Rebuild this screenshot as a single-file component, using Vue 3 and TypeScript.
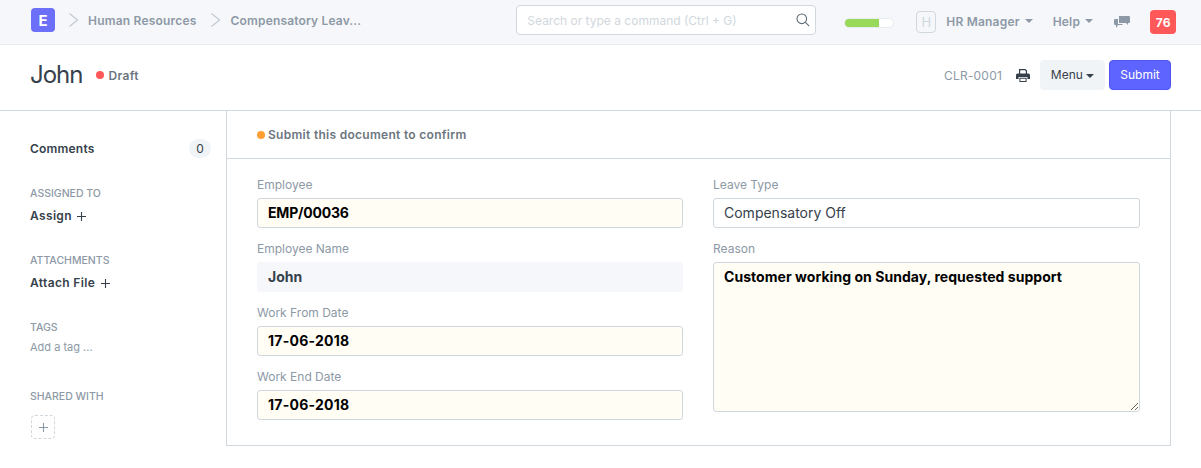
<script setup lang="ts">
interface Field { label: string; value: string; kind: string }
const left: Field[] = [
  { label: 'Employee', value: 'EMP/00036', kind: 'req tight' },
  { label: 'Employee Name', value: 'John', kind: 'read' },
  { label: 'Work From Date', value: '17-06-2018', kind: 'req date' },
  { label: 'Work End Date', value: '17-06-2018', kind: 'req date' },
]
</script>

<template>
  <div class="page">
    <header class="nav">
      <div class="logo">E</div>
      <svg class="chev" width="12" height="16" viewBox="0 0 12 16"><path d="M1.5 1.5 L9.5 8 L1.5 14.5" /></svg>
      <span class="crumb c1">Human Resources</span>
      <svg class="chev c2" width="12" height="16" viewBox="0 0 12 16"><path d="M1.5 1.5 L9.5 8 L1.5 14.5" /></svg>
      <span class="crumb c3">Compensatory Leav...</span>
      <div class="search">
        <span>Search or type a command (Ctrl + G)</span>
        <svg width="14" height="14" viewBox="0 0 14 14"><circle cx="5.8" cy="5.8" r="4.8" /><path d="M9.4 9.4 L13.2 13.2" /></svg>
      </div>
      <div class="progress"><div class="bar"></div></div>
      <div class="avatar">H</div>
      <span class="navlink user">HR Manager <i class="caret"></i></span>
      <span class="navlink help">Help <i class="caret"></i></span>
      <svg class="chat" width="16" height="14" viewBox="0 0 16 14">
        <path d="M5 1h10a1 1 0 0 1 1 1v5a1 1 0 0 1-1 1h-1v2l-2-2H5z" />
        <path d="M4 4v5h5l-1 1H4l-2 3v-3H1a1 1 0 0 1-1-1V5a1 1 0 0 1 1-1z" />
      </svg>
      <div class="badge">76</div>
    </header>

    <section class="head">
      <h1>John</h1>
      <i class="dot red"></i>
      <span class="status">Draft</span>
      <span class="docname">CLR-0001</span>
      <svg class="print" width="14" height="13" viewBox="0 0 14 13">
        <path d="M3 0h6.5L11 1.5V5H9.8V2.2L9 1.2H4.2V5H3z" />
        <path d="M1.5 4.5h11A1.5 1.5 0 0 1 14 6v4h-2.6V8H2.6v2H0V6a1.5 1.5 0 0 1 1.5-1.5z" />
        <path d="M3.4 8.8h7.2V13H3.4zM4.4 9.8v2.2h5.2V9.8z" fill-rule="evenodd" />
      </svg>
      <button class="btn menu">Menu <i class="caret dark"></i></button>
      <button class="btn submit">Submit</button>
    </section>

    <main class="main">
      <aside class="side">
        <div class="comments"><b>Comments</b><span class="count">0</span></div>
        <div class="sect s1">ASSIGNED TO</div>
        <div class="act">Assign <svg class="plus" width="9" height="9" viewBox="0 0 9 9"><path d="M0 4.5h9M4.5 0v9" /></svg></div>
        <div class="sect s2">ATTACHMENTS</div>
        <div class="act">Attach File <svg class="plus" width="9" height="9" viewBox="0 0 9 9"><path d="M0 4.5h9M4.5 0v9" /></svg></div>
        <div class="sect s3">TAGS</div>
        <div class="tag">Add a tag ...</div>
        <div class="sect s4">SHARED WITH</div>
        <div class="share"><svg width="9" height="9" viewBox="0 0 9 9"><path d="M0 4.5h9M4.5 0v9" /></svg></div>
      </aside>
      <div class="card">
        <div class="headline"><i class="dot orange"></i>Submit this document to confirm</div>
        <div class="form">
          <div class="col lcol">
            <div v-for="f in left" :key="f.label" class="field">
              <label>{{ f.label }}</label>
              <div class="input" :class="f.kind">{{ f.value }}</div>
            </div>
          </div>
          <div class="col rcol">
            <div class="field">
              <label>Leave Type</label>
              <div class="input plain">Compensatory Off</div>
            </div>
            <div class="field">
              <label>Reason</label>
              <textarea class="input req area" readonly>Customer working on Sunday, requested support</textarea>
            </div>
          </div>
        </div>
      </div>
    </main>
  </div>
</template>

<style>
html, body { margin: 0; background: #fff; }
</style>

<style scoped>
.page { width: 1201px; height: 468px; overflow: hidden; font-family: Inter, "Liberation Sans", sans-serif; color: #36414c; }
.nav { height: 40px; padding-bottom: 4px; background: #f5f7fa; border-bottom: 1px solid #e8ecf1; display: flex; align-items: center; box-sizing: content-box; position: relative; }
.logo { margin-left: 31px; width: 24px; height: 24px; border-radius: 4px; background: #6c6ff8; color: #fff; font-weight: 700; font-size: 15px; display: flex; align-items: center; justify-content: center; }
.chev { margin-left: 13px; }
.chev path { fill: none; stroke: #c0c9d2; stroke-width: 1.2; }
.crumb { font-size: 12px; font-weight: 600; color: #8d99a6; white-space: nowrap; letter-spacing: 0.2px; }
.c1 { margin-left: 8px; }
.c2 { margin-left: 13px; }
.c3 { margin-left: 9px; letter-spacing: 0.16px; }
.search { margin-left: 155px; width: 300px; height: 30px; box-sizing: border-box; border: 1px solid #d1d8dd; border-radius: 4px; background: #fff; display: flex; align-items: center; justify-content: space-between; padding: 0 5px 0 10px; font-size: 12px; color: #d1d8dd; }
.search svg { fill: none; stroke: #5e6b78; stroke-width: 1.1; }
.progress { margin-left: 28px; width: 50px; height: 10px; box-sizing: border-box; border: 1px solid #e8ecf1; border-radius: 5px; background: #fff; overflow: hidden; margin-top: 6px; }
.bar { width: 70%; height: 100%; background: #98d85b; }
.avatar { margin-left: 22px; width: 20px; height: 22px; box-sizing: border-box; border: 1px solid #d1d8dd; border-radius: 4px; color: #d1d8dd; font-size: 13px; display: flex; align-items: center; justify-content: center; margin-top: 4px; }
.navlink { font-size: 12px; font-weight: 600; color: #8d99a6; white-space: nowrap; display: flex; align-items: center; gap: 5px; letter-spacing: 0.2px; margin-top: 2px; }
.user { margin-left: 10px; }
.help { margin-left: 20px; }
.caret { display: inline-block; width: 0; height: 0; border-left: 4px solid transparent; border-right: 4px solid transparent; border-top: 4px solid #8d99a6; }
.caret.dark { border-top-color: #36414c; vertical-align: 1px; }
.chat { margin-left: 21px; fill: #8d99a6; margin-top: 4px; }
.badge { margin-left: 20px; width: 26px; height: 24px; border-radius: 4px; background: #ff5858; color: #fff; font-size: 12px; font-weight: 700; display: flex; align-items: center; justify-content: center; margin-top: 4px; }

.head { height: 60px; padding-bottom: 5px; border-bottom: 1px solid #d1d8dd; display: flex; align-items: center; }
h1 { margin: 0 0 0 30px; font-size: 24px; font-weight: 400; line-height: 32px; color: #36414c; letter-spacing: -1px; }
.dot { display: inline-block; width: 8px; height: 8px; border-radius: 50%; }
.dot.red { background: #ff5858; margin-left: 14px; margin-right: 4px; }
.dot.orange { background: #ff9f31; margin-right: 3px; }
.status { font-size: 12px; font-weight: 600; color: #6c7680; letter-spacing: 0.35px; }
.docname { margin-left: auto; font-size: 12px; color: #8d99a6; letter-spacing: 0.2px; }
.print { margin-left: 14px; fill: #36414c; }
.btn { height: 30px; box-sizing: border-box; border-radius: 4px; font: 12px Inter, sans-serif; padding: 0 0 2px; }
.menu { margin-left: 10px; width: 65px; background: #f0f4f7; border: 1px solid #f0f4f7; color: #36414c; }
.submit { margin-left: 4px; margin-right: 30px; width: 62px; background: #5e64ff; border: 1px solid #4f55f0; color: #fff; }

.main { display: flex; align-items: flex-start; }
.side { width: 181px; margin-left: 30px; padding-top: 27px; font-size: 12px; }
.comments { display: flex; justify-content: space-between; align-items: center; height: 20px; font-weight: 600; }
.comments b { font-weight: 600; color: #36414c; letter-spacing: 0.2px; }
.count { width: 22px; height: 19px; border-radius: 10px; background: #f0f4f7; display: flex; align-items: center; justify-content: center; font-weight: 400; }
.sect { font-size: 10.5px; font-weight: 500; color: #8d99a6; line-height: 14px; }
.s1 { margin-top: 29px; }
.s2 { margin-top: 29px; }
.s3 { margin-top: 29px; }
.s4 { margin-top: 36px; }
.act { margin-top: 6px; height: 18px; line-height: 18px; font-weight: 600; color: #36414c; letter-spacing: 0.35px; }
.plus { margin-left: 2px; vertical-align: -1px; }
.plus path { fill: none; stroke: #36414c; stroke-width: 1.1; }
.tag { margin-top: 5px; font-size: 11px; line-height: 14px; color: #8d99a6; }
.share { margin-top: 11px; margin-left: 1px; width: 24px; height: 24px; box-sizing: border-box; border: 1px dashed #d1d8dd; border-radius: 4px; display: flex; align-items: center; justify-content: center; }
.share path { fill: none; stroke: #8d99a6; stroke-width: 1.1; }

.card { margin-left: 15px; width: 945px; height: 335px; box-sizing: border-box; border: 1px solid #d1d8dd; border-top: 0; }
.headline { height: 48px; box-sizing: border-box; border-bottom: 1px solid #d1d8dd; padding-left: 30px; display: flex; align-items: center; font-size: 12px; font-weight: 600; color: #6c7680; letter-spacing: 0.29px; }
.form { display: flex; padding: 18px 30px 0; gap: 30px; }
.lcol { flex: 0 0 426px; }
.rcol { flex: 0 0 427px; }
.field { height: 64px; display: flex; flex-direction: column; }
label { font-size: 12px; line-height: 16px; color: #8d99a6; margin-bottom: 5px; }
.input { height: 30px; box-sizing: border-box; border: 1px solid #d1d8dd; border-radius: 3px; padding: 0 10px 2px; font-size: 14px; display: flex; align-items: center; }
.req { background: #fffdf4; font-weight: 700; color: #000; }
.tight { letter-spacing: -0.2px; }
.date { letter-spacing: 0.25px; }
.plain { background: #fff; color: #36414c; font-size: 14px; }
.read { background: #f5f7fa; border-color: #f5f7fa; font-weight: 700; color: #36414c; }
.area { height: 150px; width: 427px; display: block; resize: vertical; padding: 5px 10px; font-family: inherit; line-height: 18px; outline: none; flex: none; letter-spacing: 0.05px; }
</style>
